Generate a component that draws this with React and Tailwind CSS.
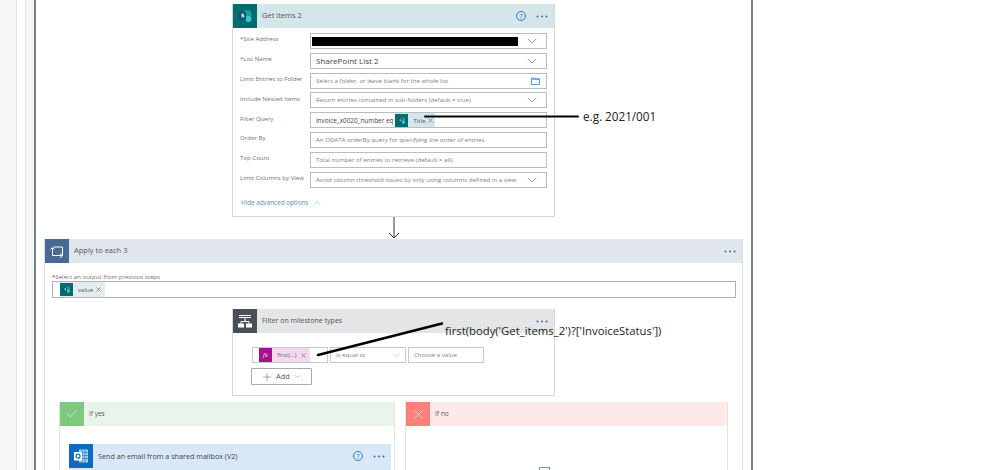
import { ChevronDown, ChevronUp, Plus, X, Check } from 'lucide-react';

const font = { fontFamily: '"Open Sans", "Noto Sans", sans-serif' };

function SharePointIcon({ size = 24 }) {
  return (
    <svg width={size} height={size} viewBox="0 0 24 24" className="block shrink-0">
      <rect width="24" height="24" fill="#036c70" />
      <circle cx="14.5" cy="10" r="4" fill="#1a9ba1" />
      <circle cx="15.5" cy="15" r="3" fill="#37c6d0" />
      <rect x="6" y="8" width="7" height="7.5" rx="1" fill="#04565a" />
      <path d="M11 10h-2.2v1.6H11v1.3H8.2" stroke="#fff" strokeWidth="0.9" fill="none" />
    </svg>
  );
}

function LoopIcon() {
  return (
    <svg width="24" height="24" viewBox="0 0 24 24" fill="none" stroke="#fff" strokeWidth="1" className="block">
      <path d="M8.5 8h9v8.5h-10V9" />
      <path d="M5.5 10.5 7.5 8.5l2 2" />
      <path d="M15 14.5l2.5 2.2-2.5 2.2" />
    </svg>
  );
}

function FilterIcon() {
  return (
    <svg width="24" height="24" viewBox="0 0 24 24" fill="none" stroke="#fff" strokeWidth="1" className="block">
      <path d="M6 6.5h12M6 8.5h12M12 8.5v4M8 12.5h8M8 12.5v2M16 12.5v2" />
      <rect x="5.5" y="15" width="5" height="3" fill="#fff" />
      <rect x="13.5" y="15" width="5" height="3" fill="#fff" />
    </svg>
  );
}

function OutlookIcon() {
  return (
    <svg width="24" height="24" viewBox="0 0 24 24" className="block">
      <rect width="24" height="24" fill="#0f6cbd" />
      <rect x="10" y="5.5" width="9" height="13" fill="#9fd0f2" />
      <path d="M10 8.5h9M10 11.5h9M10 14.5h9M13 5.5v13M16 5.5v13" stroke="#0f6cbd" strokeWidth="0.6" />
      <rect x="5" y="8" width="8" height="8.5" rx="0.6" fill="#fff" />
      <circle cx="9" cy="12.2" r="2" fill="none" stroke="#0f6cbd" strokeWidth="1.2" />
    </svg>
  );
}

function HelpDots() {
  return (
    <div className="flex items-center gap-[10px] pr-[6px]">
      <span className="flex h-[10px] w-[10px] items-center justify-center rounded-full border border-[#2f7fc4] text-[7px] leading-none text-[#2f7fc4]">?</span>
      <Dots color="#2f6f9f" />
    </div>
  );
}

function Dots({ color }) {
  return (
    <svg width="12" height="3" viewBox="0 0 12 3" className="block">
      <circle cx="1.5" cy="1.5" r="1" fill={color} />
      <circle cx="6" cy="1.5" r="1" fill={color} />
      <circle cx="10.5" cy="1.5" r="1" fill={color} />
    </svg>
  );
}

function Row({ label, required, placeholder, value, chevron, folder, children }) {
  return (
    <div className="flex items-center">
      <div className="w-[77px] shrink-0 pb-[3px] pl-[7px] text-[6.1px] leading-none whitespace-nowrap text-[#707070]">
        {required && <span>*</span>}
        {label}
      </div>
      <div className="flex h-[16px] w-[237px] shrink-0 items-center border border-[#b9bdc0] pl-[5px] pr-[6px]">
        {children}
        {value && <span className="text-[8px] leading-none text-[#444]">{value}</span>}
        {placeholder && <span className="text-[6.1px] leading-none whitespace-nowrap text-[#808080]">{placeholder}</span>}
        {chevron && <ChevronDown size={16} strokeWidth={0.9} className="ml-auto shrink-0 text-[#1f5f99]" />}
        {folder && (
          <svg width="9" height="8" viewBox="0 0 9 8" fill="none" stroke="#2f7fc4" strokeWidth="0.8" className="ml-auto shrink-0">
            <path d="M.5 1h3l.6.9H8.5v5.6H.5z" />
            <path d="M.5 2.2h8" />
          </svg>
        )}
      </div>
    </div>
  );
}

function GetItemsCard() {
  return (
    <div className="mx-auto h-[213px] w-[323px] border-x border-b border-[#d5d8da] bg-white">
      <div className="flex h-[24px] items-center bg-[#d4e6ea]">
        <SharePointIcon />
        <span className="ml-[5px] text-[7.5px] text-[#555]">Get items 2</span>
        <div className="ml-auto"><HelpDots /></div>
      </div>
      <div className="flex flex-col gap-[3.8px] pt-[5px]">
        <Row label="Site Address" required chevron>
          <div className="-ml-[4px] h-[9px] w-[206px] shrink-0 bg-black" />
        </Row>
        <Row label="List Name" required value="SharePoint List 2" chevron />
        <Row label="Limit Entries to Folder" placeholder="Select a folder, or leave blank for the whole list" folder />
        <Row label="Include Nested Items" placeholder="Return entries contained in sub-folders (default = true)" chevron />
        <Row label="Filter Query">
          <span className="pt-[3px] text-[6.4px] leading-none whitespace-nowrap text-[#444]">invoice_x0020_number eq</span>
          <div className="ml-[2px] flex h-[14px] items-center bg-[#d4e6ea] pr-[1px]">
            <SharePointIcon size={13} />
            <span className="ml-[5px] text-[6.1px] text-[#555]">Title</span>
            <X size={7} className="ml-[2px] text-[#555]" />
          </div>
        </Row>
        <Row label="Order By" placeholder="An ODATA orderBy query for specifying the order of entries." />
        <Row label="Top Count" placeholder="Total number of entries to retrieve (default = all)." />
        <Row label="Limit Columns by View" placeholder="Avoid column threshold issues by only using columns defined in a view" chevron />
      </div>
      <div className="flex items-center gap-[3px] pl-[8px] pt-[9px] text-[6.3px] leading-[10px] text-[#4b93b5]">
        Hide advanced options
        <ChevronUp size={12} strokeWidth={0.9} />
      </div>
    </div>
  );
}

function DownArrow() {
  return (
    <div className="flex h-[22px] justify-center">
      <svg width="14" height="22" viewBox="0 0 14 22" fill="none" stroke="#333" strokeWidth="1">
        <path d="M7 0v21M2 16l5 5 5-5" />
      </svg>
    </div>
  );
}

function FilterCard() {
  return (
    <div className="mx-auto mt-[11px] h-[87px] w-[323px] border-x border-b border-[#d5d8da] bg-white">
      <div className="flex h-[24px] items-center bg-[#e3e5e7]">
        <div className="bg-[#484f58]"><FilterIcon /></div>
        <span className="ml-[5px] text-[7px] text-[#555]">Filter on milestone types</span>
        <div className="ml-auto pr-[6px]"><Dots color="#2f6f9f" /></div>
      </div>
      <div className="flex pl-[19px] pt-[14px]">
        <div className="h-[16px] w-[76px] border border-[#c8c8c8] pl-[6px]">
          <div className="flex h-[14px] w-[51px] items-center bg-[#f3d9ee]">
            <span className="flex h-[14px] w-[13px] shrink-0 items-center justify-center bg-[#a4108e] text-[6px] italic leading-none text-white">fx</span>
            <span className="ml-[5px] text-[6.1px] whitespace-nowrap text-[#666]">first(...)</span>
            <X size={7} className="ml-[3px] shrink-0 text-[#555]" />
          </div>
        </div>
        <div className="ml-[2px] flex h-[16px] w-[76px] items-center border border-[#c8c8c8] pl-[5px] pr-[3px] text-[6.1px] text-[#808080]">
          is equal to
          <ChevronDown size={11} strokeWidth={0.9} className="ml-auto" />
        </div>
        <div className="ml-[2px] flex h-[16px] w-[76px] items-center border border-[#c8c8c8] pl-[5px] text-[6.1px] text-[#808080]">
          Choose a value
        </div>
      </div>
      <div className="ml-[18px] mt-[5px] flex h-[17px] w-[61px] items-center justify-center gap-[3px] rounded-[1px] border border-[#a9a9a9] text-[7.5px] text-[#555]">
        <Plus size={12} strokeWidth={1} />
        Add
        <ChevronDown size={9} strokeWidth={1} />
      </div>
    </div>
  );
}

function Branches() {
  return (
    <div className="mt-[6px] flex gap-[10px] pl-[14px]">
      <div className="h-[80px] w-[336px] border-x border-[#e3e3e3]">
        <div className="flex h-[24px] items-center bg-[#e9f5ea]">
          <div className="flex h-[24px] w-[24px] items-center justify-center bg-[#7cc97f]">
            <Check size={14} strokeWidth={1} className="text-white" />
          </div>
          <span className="ml-[5px] text-[6.5px] text-[#555]">If yes</span>
        </div>
        <div className="ml-[9px] mt-[18px] h-[30px] w-[322px] bg-[#d9e8f6]">
          <div className="flex h-[24px] items-center">
            <OutlookIcon />
            <span className="ml-[5px] text-[7.2px] text-[#444]">Send an email from a shared mailbox (V2)</span>
            <div className="ml-auto"><HelpDots /></div>
          </div>
        </div>
      </div>
      <div className="h-[80px] w-[323px] border-x border-[#e3e3e3]">
        <div className="flex h-[24px] items-center bg-[#fee9e9]">
          <div className="flex h-[24px] w-[24px] items-center justify-center bg-[#fb8079]">
            <X size={15} strokeWidth={1} className="text-white" />
          </div>
          <span className="ml-[5px] text-[6.5px] text-[#555]">If no</span>
        </div>
        <div className="ml-[133px] mt-[41px] h-[8px] w-[11px] border border-[#7d92a8]" />
      </div>
    </div>
  );
}

function ApplyToEach() {
  return (
    <div className="mx-auto w-[699px] border-x border-[#dcdfe2]">
      <div className="flex h-[24px] items-center bg-[#e1e6ec]">
        <div className="bg-[#486991]"><LoopIcon /></div>
        <span className="ml-[5px] text-[7.5px] text-[#555]">Apply to each 3</span>
        <div className="ml-auto pr-[6px]"><Dots color="#2f6f9f" /></div>
      </div>
      <div className="pl-[7px] pt-[10px] text-[6.1px] leading-[8px] text-[#707070]">
        <span className="text-[#a4262c]">*</span>Select an output from previous steps
      </div>
      <div className="ml-[7px] flex h-[17px] w-[684px] items-center border border-[#b0b4b8] pl-[7px]">
        <div className="flex h-[15px] items-center bg-[#e3ecef] pr-[3px]">
          <SharePointIcon size={13} />
          <span className="ml-[5px] text-[6.1px] text-[#555]">value</span>
          <X size={7} className="ml-[2px] text-[#555]" />
        </div>
      </div>
      <FilterCard />
      <Branches />
    </div>
  );
}

export default function App() {
  return (
    <div className="relative flex h-[470px] w-[999px] overflow-hidden bg-white" style={font}>
      {/* canvas gutter on the left */}
      <div className="w-[17px] shrink-0 border-r border-[#e4e4e4] bg-[#f7f7f7]" />
      <div className="w-[9px] shrink-0 border-r border-[#e6e6e6]" />
      <div className="w-[8px] shrink-0 bg-[#f6f6f6]" />
      <div className="h-[470px] w-[719px] shrink-0 border-x-2 border-[#6f7f90] bg-white pt-[4px]">
        <GetItemsCard />
        <DownArrow />
        <ApplyToEach />
      </div>

      {/* hand-drawn annotations over the flow */}
      <svg width="999" height="470" className="absolute left-0 top-0" fill="none" stroke="#000">
        <path d="M425 116.5H578" strokeWidth="2" strokeLinecap="round" />
        <path d="M318 355L442 323.5" strokeWidth="2.5" strokeLinecap="round" />
      </svg>
      <span className="absolute left-[583px] top-[108px] text-[11.7px] leading-[16px] whitespace-nowrap text-[#222]">e.g. 2021/001</span>
      <span className="absolute left-[445px] top-[323px] text-[11.3px] leading-[16px] whitespace-nowrap text-[#222]">first(body('Get_items_2')?['InvoiceStatus'])</span>
    </div>
  );
}
